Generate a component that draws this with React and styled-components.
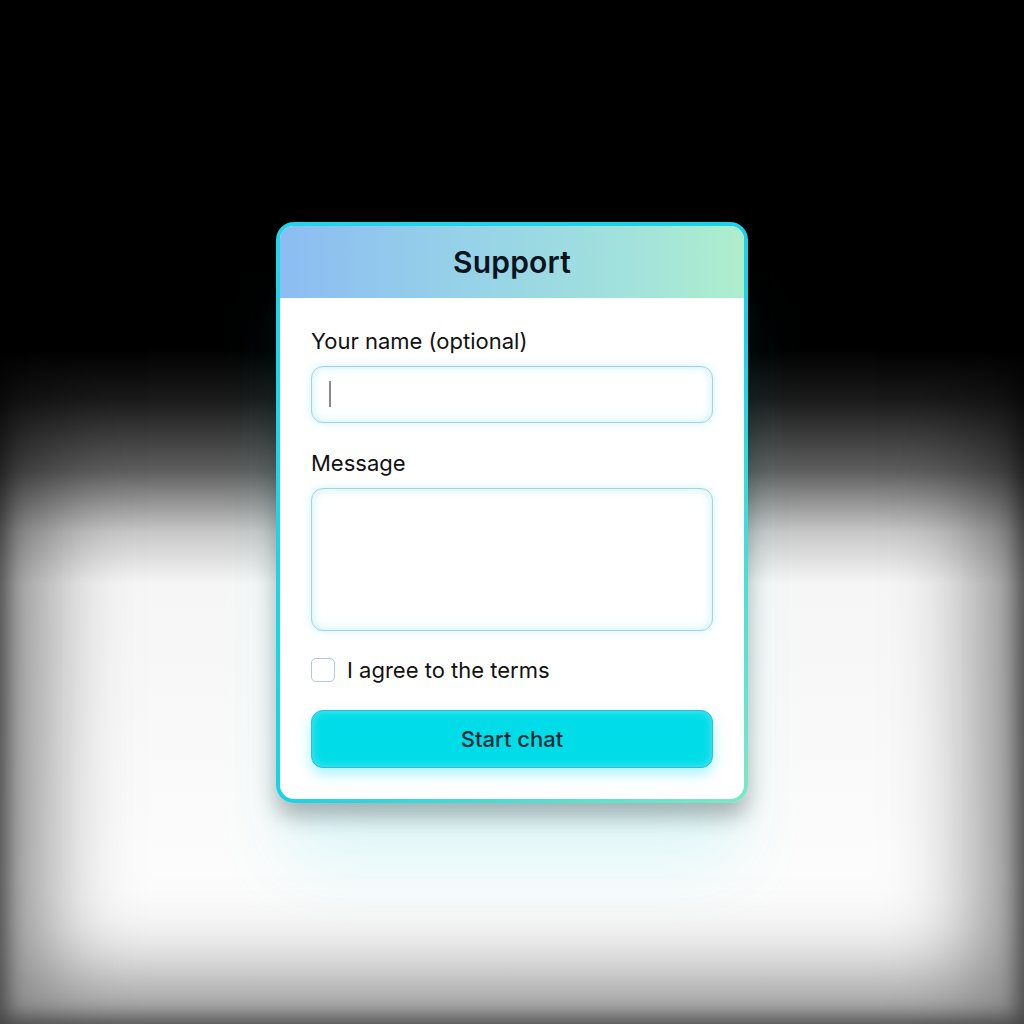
import React from "react";
import styled, { createGlobalStyle } from "styled-components";

const GlobalStyle = createGlobalStyle`
  html, body {
    margin: 0;
    padding: 0;
  }
  body {
    font-family: Inter, "Noto Sans", "Liberation Sans", sans-serif;
    background: #000;
  }
`;

const Page = styled.div`
  position: relative;
  width: 1024px;
  height: 1024px;
  display: flex;
  align-items: center;
  justify-content: center;
  background: linear-gradient(
    180deg,
    #000 0%,
    #000 34%,
    #1a1a1a 39%,
    #5e5e5e 46%,
    #c8c8c8 52%,
    #f6f6f6 57%,
    #ffffff 100%
  );
  overflow: hidden;

  &::after {
    content: "";
    position: absolute;
    inset: 0;
    pointer-events: none;
    box-shadow: inset 0 0 90px 40px rgba(0, 0, 0, 0.5),
      inset 0 0 20px 6px rgba(0, 0, 0, 0.5);
  }
`;

const CardFrame = styled.div`
  position: relative;
  z-index: 1;
  box-sizing: border-box;
  width: 472px;
  padding: 4px;
  border-radius: 18px;
  background: linear-gradient(135deg, #22d6ea 0%, #18d3e6 55%, #7de8c4 100%);
  box-shadow: 0 14px 22px rgba(0, 0, 0, 0.28),
    0 70px 70px -10px rgba(0, 220, 235, 0.12);
`;

const Card = styled.div`
  border-radius: 14px;
  background: #fff;
  overflow: hidden;
`;

const Header = styled.div`
  height: 72px;
  display: flex;
  align-items: center;
  justify-content: center;
  background: linear-gradient(90deg, #8cbcf2 0%, #96d2e8 40%, #a2e2dc 75%, #aeeecc 100%);
`;

const Title = styled.h1`
  margin: 0;
  font-size: 30px;
  font-weight: 600;
  color: #0b1320;
  letter-spacing: 0.2px;
`;

const Body = styled.form`
  display: flex;
  flex-direction: column;
  padding: 30px 31px 31px;
`;

const Label = styled.label`
  font-size: 22px;
  line-height: 27px;
  color: #111;
  margin-bottom: 11px;
`;

const fieldStyles = `
  box-sizing: border-box;
  width: 100%;
  border: 1.5px solid #a9cfe6;
  border-radius: 12px;
  background: #fff;
  box-shadow: inset 0 0 10px rgba(120, 225, 240, 0.45),
    0 0 10px rgba(120, 225, 240, 0.35);
  outline: none;
  font-family: inherit;
  font-size: 20px;
`;

const Input = styled.div`
  ${fieldStyles}
  height: 57px;
  display: flex;
  align-items: center;
  padding-left: 17px;
  margin-bottom: 27px;
`;

const Caret = styled.span`
  width: 1.5px;
  height: 26px;
  background: #8a8a8a;
`;

const TextArea = styled.textarea`
  ${fieldStyles}
  height: 143px;
  resize: none;
  margin-bottom: 26px;
`;

const CheckRow = styled.label`
  display: flex;
  align-items: center;
  gap: 12px;
  font-size: 22px;
  line-height: 27px;
  color: #111;
  margin-bottom: 26px;
`;

const Box = styled.span`
  box-sizing: border-box;
  width: 24px;
  height: 24px;
  border: 1.5px solid #b6c6de;
  border-radius: 5px;
  background: #fff;
`;

const Button = styled.button`
  height: 58px;
  width: 100%;
  border: 1.5px solid #3ab8d4;
  border-radius: 12px;
  background: #00dde8;
  color: #0c2a33;
  font-family: inherit;
  font-size: 22px;
  font-weight: 500;
  box-shadow: inset 0 0 8px rgba(255, 255, 255, 0.35),
    0 6px 14px rgba(0, 220, 235, 0.35);
  cursor: pointer;
`;

export default function App() {
  return (
    <>
      <GlobalStyle />
      <Page>
        <CardFrame>
          <Card>
            <Header>
              <Title>Support</Title>
            </Header>
            <Body onSubmit={(e) => e.preventDefault()}>
              <Label>Your name (optional)</Label>
              <Input>
                <Caret />
              </Input>
              <Label>Message</Label>
              <TextArea />
              <CheckRow>
                <Box />
                I agree to the terms
              </CheckRow>
              <Button type="submit">Start chat</Button>
            </Body>
          </Card>
        </CardFrame>
      </Page>
    </>
  );
}
